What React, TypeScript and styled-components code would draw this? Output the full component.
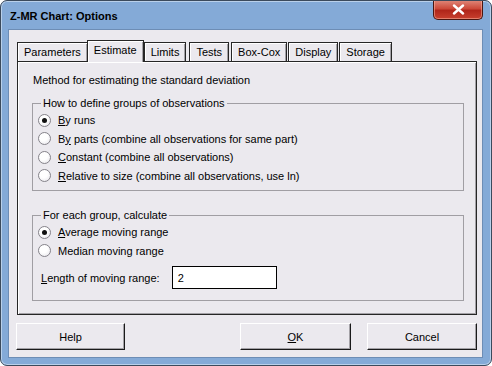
import React from "react";
import styled, { createGlobalStyle } from "styled-components";

const GlobalStyle = createGlobalStyle`
  html, body {
    margin: 0;
    padding: 0;
    background: #ffffff;
  }
  * {
    box-sizing: border-box;
  }
  body {
    font-family: "Liberation Sans", Arial, sans-serif;
    font-size: 11px;
    color: #000;
  }
`;

const Window = styled.div`
  display: flex;
  flex-flow: column;
  width: 492px;
  height: 366px;
  border: 1px solid #3b4a5c;
  border-radius: 7px;
  background-color: #84aad7;
  box-shadow: inset 0 0 0 1px #b9d0ea;
  overflow: hidden;
`;

const TitleBar = styled.div`
  display: flex;
  align-items: flex-start;
  height: 28px;
  padding-left: 9px;
  padding-right: 8px;
`;

const Title = styled.span`
  flex: 1;
  margin-top: 9px;
  font-size: 11px;
  font-weight: bold;
  line-height: 13px;
  color: #000;
`;

const CloseButton = styled.div`
  display: flex;
  justify-content: center;
  align-items: center;
  width: 50px;
  height: 20px;
  margin-top: -1px;
  border: 1px solid #4a1610;
  border-top: none;
  border-radius: 0 0 5px 5px;
  background: linear-gradient(#e08a7c 0%, #cc4a3a 45%, #b0261a 55%, #c8402e 100%);
  box-shadow: inset 0 0 0 1px rgba(255, 190, 170, 0.5);
`;

const Client = styled.div`
  display: flex;
  flex-flow: column;
  flex: 1;
  margin: 0 8px 7px 7px;
  padding: 10px 5px 7px 8px;
  border: 1px solid #6d8db5;
  background-color: #ebe9ee;
`;

const TabRow = styled.div`
  display: flex;
  align-items: flex-start;
  height: 22px;
  margin-bottom: -1px;
  position: relative;
  z-index: 1;
`;

const Tab = styled.div<{ $active?: boolean; $gap?: number }>`
  display: flex;
  align-items: center;
  height: ${(p) => (p.$active ? "22px" : "19px")};
  margin-top: ${(p) => (p.$active ? "0" : "2px")};
  margin-left: ${(p) => (p.$active ? "-1px" : `${p.$gap ?? 0}px`)};
  padding: ${(p) => (p.$active ? "0 6px 3px" : "0 6px 1px")};
  border: 1px solid #262626;
  border-bottom: none;
  background-color: #ebe9ee;
  box-shadow: inset 1px 1px 0 #ffffff, inset -1px 0 0 #a3a1a6;
  white-space: nowrap;
`;

const Panel = styled.div`
  display: flex;
  flex-flow: column;
  width: 460px;
  padding: 12px 12px 13px 14px;
  border: 1px solid #262626;
  box-shadow: inset 1px 1px 0 #ffffff, inset -1px -1px 0 #a3a1a6;
`;

const Intro = styled.div`
  margin-left: 1px;
  line-height: 13px;
`;

const Group = styled.fieldset<{ $top: number; $bottom: number }>`
  margin: ${(p) => p.$top}px 0 0 0;
  padding: 1px 8px ${(p) => p.$bottom}px 5px;
  border: 1px solid #a09ea3;
  min-width: 0;
`;

const Legend = styled.legend`
  margin-left: 3px;
  padding: 0 2px;
  line-height: 13px;
`;

const RadioRow = styled.label`
  display: flex;
  align-items: center;
  gap: 7px;
  height: 18.5px;
`;

const RadioCircle = styled.span<{ $checked?: boolean }>`
  display: flex;
  justify-content: center;
  align-items: center;
  width: 13px;
  height: 13px;
  border: 1px solid #85838a;
  border-radius: 50%;
  background: radial-gradient(circle at 40% 35%, #ffffff 40%, #e4e2e8 100%);

  &::after {
    content: "";
    display: ${(p) => (p.$checked ? "block" : "none")};
    width: 5px;
    height: 5px;
    border-radius: 50%;
    background-color: #111;
  }
`;

const FieldRow = styled.div`
  display: flex;
  align-items: center;
  gap: 12px;
  margin: 6px 0 0 3px;
`;

const TextInput = styled.div`
  display: flex;
  align-items: center;
  width: 105px;
  height: 23px;
  padding-left: 5px;
  border: 1px solid #000;
  background-color: #fff;
`;

const ButtonRow = styled.div`
  display: flex;
  align-items: center;
  margin-top: 8px;
  margin-left: -1px;
`;

const Button = styled.div<{ $width: number; $gap?: number }>`
  display: flex;
  justify-content: center;
  align-items: center;
  width: ${(p) => p.$width}px;
  height: 27px;
  margin-left: ${(p) => p.$gap ?? 0}px;
  border-top: 1px solid #ffffff;
  border-left: 1px solid #ffffff;
  border-right: 1px solid #1a1a1a;
  border-bottom: 1px solid #1a1a1a;
  box-shadow: inset -1px -1px 0 #a3a1a6;
  background-color: #ebe9ee;
`;

const Spacer = styled.div`
  flex: 1;
`;

const Key = styled.u`
  text-decoration-thickness: 1px;
  text-underline-offset: 1px;
`;

const tabs = ["Parameters", "Estimate", "Limits", "Tests", "Box-Cox", "Display", "Storage"];
const tabGaps = [0, 0, 0, 3, 2, 1, 1];

const Radio = (props: { checked?: boolean; children: React.ReactNode }) => (
  <RadioRow>
    <RadioCircle $checked={props.checked} />
    <span>{props.children}</span>
  </RadioRow>
);

const App = () => {
  return (
    <>
      <GlobalStyle />
      <Window>
        <TitleBar>
          <Title>Z-MR Chart: Options</Title>
          <CloseButton>
            <svg width="13" height="11" viewBox="0 0 13 11">
              <path
                d="M2 1.5 L11 9.5 M11 1.5 L2 9.5"
                stroke="#fff"
                strokeWidth="2.4"
                strokeLinecap="round"
              />
            </svg>
          </CloseButton>
        </TitleBar>
        <Client>
          <TabRow>
            {tabs.map((t, i) => (
              <Tab key={t} $active={t === "Estimate"} $gap={tabGaps[i]}>
                {t}
              </Tab>
            ))}
          </TabRow>
          <Panel>
            <Intro>Method for estimating the standard deviation</Intro>
            <Group $top={10} $bottom={5}>
              <Legend>How to define groups of observations</Legend>
              <Radio checked>
                <Key>B</Key>y runs
              </Radio>
              <Radio>
                B<Key>y</Key> parts (combine all observations for same part)
              </Radio>
              <Radio>
                <Key>C</Key>onstant (combine all observations)
              </Radio>
              <Radio>
                <Key>R</Key>elative to size (combine all observations, use ln)
              </Radio>
            </Group>
            <Group $top={18} $bottom={11}>
              <Legend>For each group, calculate</Legend>
              <Radio checked>
                <Key>A</Key>verage moving range
              </Radio>
              <Radio>Median moving range</Radio>
              <FieldRow>
                <span>
                  <Key>L</Key>ength of moving range:
                </span>
                <TextInput>2</TextInput>
              </FieldRow>
            </Group>
          </Panel>
          <ButtonRow>
            <Button $width={109}>Help</Button>
            <Spacer />
            <Button $width={111}>
              <span>
                <Key>O</Key>K
              </span>
            </Button>
            <Button $width={110} $gap={16}>
              Cancel
            </Button>
          </ButtonRow>
        </Client>
      </Window>
    </>
  );
};

export default App;
